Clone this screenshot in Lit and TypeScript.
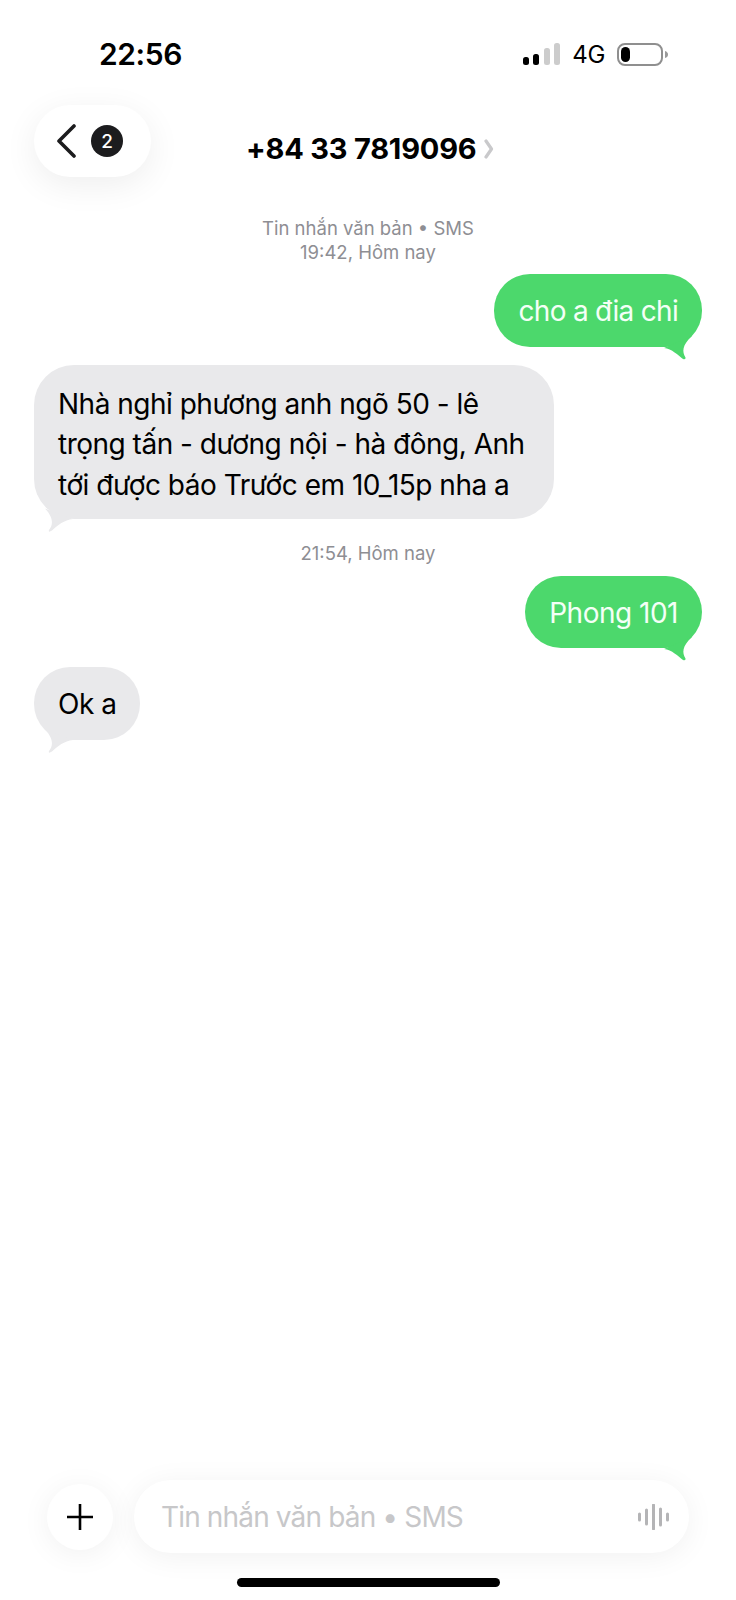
import { css, html, LitElement } from 'lit';
import { customElement } from 'lit/decorators.js';

@customElement('app-root')
export class AppRoot extends LitElement {
  static styles = css`
    :host {
      display: block;
      width: 736px;
      height: 1600px;
      background: #fff;
      font-family: Inter, "Noto Sans", sans-serif;
      color: #000;
      overflow: hidden;
    }

    .page {
      display: flex;
      flex-direction: column;
      height: 1600px;
    }

    /* Status bar */
    .status {
      display: flex;
      justify-content: space-between;
      align-items: center;
      height: 24px;
      padding: 42px 68px 0 99px;
    }

    .time {
      font-size: 30px;
      font-weight: 600;
      letter-spacing: -0.4px;
    }

    .status-right {
      display: flex;
      align-items: center;
    }

    .carrier {
      font-size: 24px;
      font-weight: 400;
      letter-spacing: -0.3px;
      margin: 0 12px 0 11px;
    }

    /* Nav */
    .nav {
      position: relative;
      height: 72px;
      margin-top: 39px;
      padding: 0 34px;
    }

    .back {
      display: flex;
      align-items: center;
      gap: 15px;
      width: 117px;
      height: 72px;
      padding-left: 22px;
      box-sizing: border-box;
      border-radius: 36px;
      background: #fff;
      box-shadow: 0 8px 34px rgba(0, 0, 0, 0.07);
    }

    .badge {
      display: flex;
      align-items: center;
      justify-content: center;
      width: 32px;
      height: 32px;
      border-radius: 50%;
      background: #1c1c1e;
      color: #fff;
      font-size: 19px;
      font-weight: 500;
    }

    .title {
      position: absolute;
      left: 246px;
      top: 26px;
      display: flex;
      align-items: center;
      gap: 8px;
      font-size: 29px;
      font-weight: 700;
      letter-spacing: -0.2px;
      white-space: nowrap;
    }

    /* Thread */
    .thread {
      flex: 1;
      display: flex;
      flex-direction: column;
      padding: 0 34px;
    }

    .meta {
      text-align: center;
      font-size: 18.5px;
      line-height: 24px;
      color: #8e8e93;
    }

    .meta.first {
      margin-top: 39px;
    }

    .meta.later {
      margin-top: 22px;
    }

    .bubble {
      position: relative;
      font-size: 28px;
      letter-spacing: -0.5px;
      line-height: 40.5px;
      padding: 17px 24px 15px;
      border-radius: 36px;
    }

    .out {
      align-self: flex-end;
      background: #4cd86c;
      color: #f4fff6;
    }

    .in {
      align-self: flex-start;
      background: #e9e9eb;
      color: #000;
    }

    .in.wide {
      padding: 19px 29px 13.5px 24px;
      border-radius: 40px;
    }

    .short {
      letter-spacing: -0.7px;
    }

    .tail {
      position: absolute;
      bottom: -13px;
      width: 40px;
      height: 26px;
    }

    .out .tail {
      right: 0;
      fill: #4cd86c;
    }

    .in .tail {
      left: 0;
      fill: #e9e9eb;
    }

    .m1 {
      margin-top: 10px;
    }

    .m2 {
      margin-top: 18px;
    }

    .m3 {
      margin-top: 11px;
    }

    .m4 {
      margin-top: 19px;
    }

    /* Composer */
    .composer {
      display: flex;
      align-items: center;
      gap: 21px;
      padding: 0 47px;
    }

    .plus {
      display: flex;
      align-items: center;
      justify-content: center;
      flex: none;
      width: 66px;
      height: 66px;
      border-radius: 50%;
      background: #fff;
      box-shadow: 0 4px 30px rgba(0, 0, 0, 0.06);
    }

    .input {
      flex: 1;
      display: flex;
      align-items: center;
      justify-content: space-between;
      height: 73px;
      padding: 0 19px 0 27px;
      border-radius: 37px;
      background: #fff;
      box-shadow: 0 4px 30px rgba(0, 0, 0, 0.06);
      font-size: 28px;
      letter-spacing: -0.85px;
      color: #c7c7c9;
    }

    .home {
      width: 263px;
      height: 9px;
      margin: 25px auto 13px;
      border-radius: 5px;
      background: #000;
    }

    svg {
      display: block;
    }
  `;

  private outTail() {
    return html`<svg class="tail" viewBox="0 0 40 26"><path d="M2 14C10 15 16 21 21 25Q24 26 23.5 23.5C20 18 20 11 30 2Z"/></svg>`;
  }

  private inTail() {
    return html`<svg class="tail" viewBox="0 0 40 26"><path d="M39 13C30 14 24 19 18 24.5Q14 27 15 24C19 19 20 12 11 2.5Z"/></svg>`;
  }

  render() {
    return html`
      <div class="page">
        <div class="status">
          <span class="time">22:56</span>
          <div class="status-right">
            <svg width="38" height="23" viewBox="0 0 38 23">
              <rect x="0" y="14" width="6" height="8" rx="2.5" fill="#000"/>
              <rect x="10" y="11" width="6" height="11" rx="2.5" fill="#000"/>
              <rect x="21" y="5" width="6" height="17" rx="2.5" fill="#ccc"/>
              <rect x="31" y="0" width="6" height="22" rx="2.5" fill="#ccc"/>
            </svg>
            <span class="carrier">4G</span>
            <svg width="51" height="23" viewBox="0 0 51 23">
              <rect x="1" y="1" width="44" height="21" rx="7" fill="#fff" stroke="#8f8f8f" stroke-width="2"/>
              <rect x="4" y="4" width="9" height="15" rx="4.5" fill="#000"/>
              <path d="M48 8Q51 9 51 11.5Q51 14 48 15Z" fill="#9a9a9a"/>
            </svg>
          </div>
        </div>

        <div class="nav">
          <div class="back">
            <svg width="20" height="34" viewBox="0 0 20 34">
              <path d="M18 2L3 17L18 32" fill="none" stroke="#1c1c1e" stroke-width="3.6" stroke-linecap="round" stroke-linejoin="round"/>
            </svg>
            <span class="badge">2</span>
          </div>
          <div class="title">
            <span>+84 33 7819096</span>
            <svg width="10" height="20" viewBox="0 0 10 20">
              <path d="M2 2L7.5 10L2 18" fill="none" stroke="#c9c9cb" stroke-width="3.2" stroke-linecap="round" stroke-linejoin="round"/>
            </svg>
          </div>
        </div>

        <div class="thread">
          <div class="meta first">Tin nhắn văn bản • SMS<br />19:42, Hôm nay</div>
          <div class="bubble out short m1">cho a đia chi${this.outTail()}</div>
          <div class="bubble in wide m2">Nhà nghỉ phương anh ngõ 50 - lê<br />trọng tấn - dương nội - hà đông, Anh<br />tới được báo Trước em 10_15p nha a${this.inTail()}</div>
          <div class="meta later">21:54, Hôm nay</div>
          <div class="bubble out m3">Phong 101${this.outTail()}</div>
          <div class="bubble in m4">Ok a${this.inTail()}</div>
        </div>

        <div class="composer">
          <div class="plus">
            <svg width="26" height="26" viewBox="0 0 26 26">
              <path d="M13 0V26M0 13H26" stroke="#000" stroke-width="2.6"/>
            </svg>
          </div>
          <div class="input">
            <span>Tin nhắn văn bản • SMS</span>
            <svg width="32" height="26" viewBox="0 0 32 26">
              <path d="M1.5 10V16M8.5 6V20M15.5 1V25M22.5 5V21M29.5 10V16" stroke="#b4b4b6" stroke-width="3" stroke-linecap="round"/>
            </svg>
          </div>
        </div>
        <div class="home"></div>
      </div>
    `;
  }
}
